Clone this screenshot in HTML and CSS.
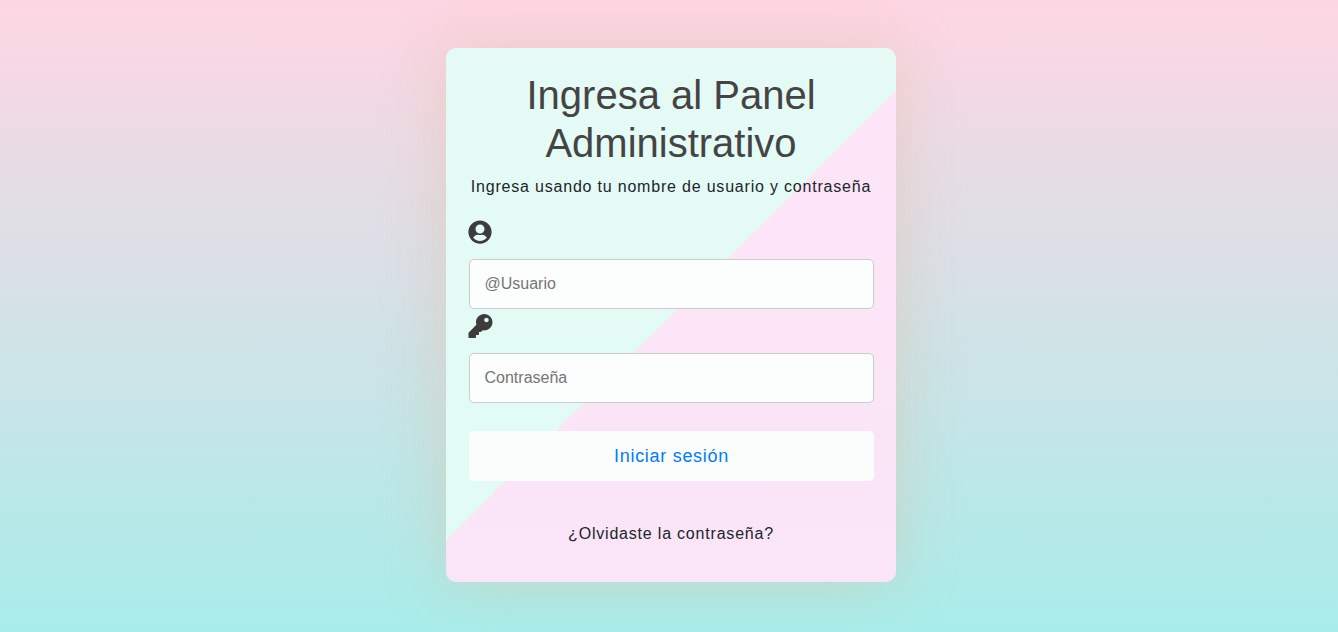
FILE: index.html
```html
<!DOCTYPE html>
<html lang="es">
<head>
<meta charset="utf-8">
<title>Panel Administrativo</title>
<link rel="stylesheet" href="styles.css">
</head>
<body>
<main class="card">
  <h1 class="title">Ingresa al Panel Administrativo</h1>
  <p class="lead">Ingresa usando tu nombre de usuario y contraseña</p>
  <form class="form">
    <label class="icon" for="user"><svg viewBox="0 0 496 512" width="24" height="24"><path fill="currentColor" d="M248 8C111 8 0 119 0 256s111 248 248 248 248-111 248-248S385 8 248 8zm0 88c53 0 96 43 96 96s-43 96-96 96-96-43-96-96 43-96 96-96zm0 352c-58.700 0-111.300-26.600-146.500-68.200 18.800-35.400 55.600-67.800 98.500-67.800 2.400 0 4.800.4 7.100 1.100 13 4.200 26.600 6.900 40.900 6.900 14.300 0 28-2.700 40.900-6.900 2.300-.7 4.700-1.100 7.100-1.100 42.900 0 79.700 32.400 98.500 67.800C359.300 421.400 306.700 448 248 448z"/></svg></label>
    <input class="field" id="user" type="text" placeholder="@Usuario">
    <label class="icon" for="pass"><svg viewBox="-10 0 512 512" width="24" height="24" overflow="visible"><path fill="currentColor" d="M512 176.001C512 273.203 433.202 352 336 352c-11.220 0-22.190-1.062-32.827-3.069l-24.012 27.014A23.999 23.999 0 0 1 261.223 384H224v40c0 13.255-10.745 24-24 24h-40v40c0 13.255-10.745 24-24 24H24c-13.255 0-24-10.745-24-24v-78.059c0-6.365 2.529-12.470 7.029-16.971l161.802-161.802C163.108 213.814 160 195.271 160 176 160 78.798 238.797.001 335.999 0 433.488-.001 512 78.511 512 176.001zM336 128c0 26.510 21.490 48 48 48s48-21.490 48-48-21.490-48-48-48-48 21.490-48 48z"/></svg></label>
    <input class="field" id="pass" type="password" placeholder="Contraseña">
    <button class="submit" type="button">Iniciar sesión</button>
  </form>
  <a class="forgot">¿Olvidaste la contraseña?</a>
</main>
</body>
</html>
```
FILE: styles.css
```css
* { box-sizing: border-box; }
body {
  margin: 0;
  min-height: 100vh;
  padding-top: 48px;
  font: 16px/24px "Liberation Sans", Arial, sans-serif;
  color: #212529;
  background: linear-gradient(#fed6e3, #a8edea);
}
.card {
  width: 450px;
  height: 534px;
  margin-left: 446px;
  padding: 23px 22px 0 23px;
  border-radius: 10px;
  background: linear-gradient(135deg, rgba(228, 252, 246, .95) 50%, rgba(253, 229, 248, .95) 50%);
  box-shadow: 0 0 60px rgba(222, 184, 150, .43);
  text-align: center;
}
.title {
  margin: 0 1px 8px 0;
  font-size: 40px;
  font-weight: 400;
  line-height: 48px;
  color: #444;
}
.lead { margin: 0 -9px 21px; padding-right: 1px; letter-spacing: .8px; line-height: 24px; }
.form { display: flex; flex-direction: column; }
.icon { display: block; height: 39px; margin-left: -1px; text-align: left; color: #3c3c3c; }
.icon svg { display: block; }
.field {
  height: 50px;
  margin-bottom: 5px;
  padding: 0 15px 0 14.500px;
  border: 1px solid #ccc;
  border-radius: 5px;
  font: inherit;
  background: #fcfefd;
}
.field::placeholder { color: #757575; }
.submit {
  height: 50px;
  margin-top: 23px;
  padding: 0 6px;
  border: 0;
  border-radius: 5px;
  font: 18px/24px "Liberation Sans", Arial, sans-serif;
  letter-spacing: .7px;
  color: #007bff;
  background: #fbfdfc;
}
.forgot { display: block; margin-top: 41px; padding-right: 1px; letter-spacing: .8px; }
```
